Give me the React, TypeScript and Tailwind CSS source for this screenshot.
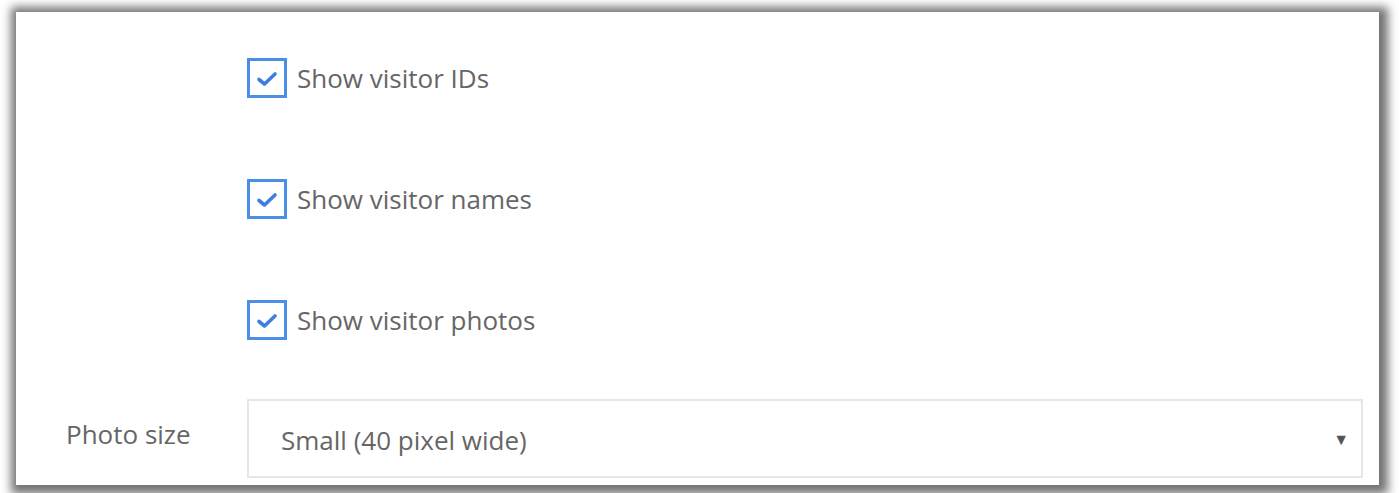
import React, { useState } from "react";

const font = { fontFamily: '"Open Sans", "Noto Sans", sans-serif' };

type RowProps = { label: string; checked: boolean; onToggle: () => void };

const CheckRow: React.FC<RowProps> = ({ label, checked, onToggle }) => (
  <label className="flex items-center gap-[10px] cursor-pointer select-none">
    <span
      onClick={onToggle}
      className="flex h-[40px] w-[40px] items-center justify-center border-[3px] border-[#4a8ee6] bg-white"
    >
      {checked && (
        <svg width="22" height="16" viewBox="0 0 22 16" fill="none" className="mt-[2px]">
          <path
            d="M3 8.5 L8.5 13 L19 3"
            stroke="#3d7fe0"
            strokeWidth="3.6"
            strokeLinecap="round"
            strokeLinejoin="round"
          />
        </svg>
      )}
    </span>
    <span className="text-[26px] text-[#666666] leading-none">{label}</span>
  </label>
);

const App: React.FC = () => {
  const [ids, setIds] = useState(true);
  const [names, setNames] = useState(true);
  const [photos, setPhotos] = useState(true);

  return (
    <div className="h-[493px] w-[1399px] bg-white pl-[16px] pt-[12px]" style={font}>
      <div className="flex h-[473px] w-[1363px] flex-col bg-white pt-[46px] shadow-[2px_2px_9px_7px_rgba(0,0,0,0.55)]">
        <div className="flex flex-col gap-[81px] pl-[231px]">
          <CheckRow label="Show visitor IDs" checked={ids} onToggle={() => setIds(!ids)} />
          <CheckRow label="Show visitor names" checked={names} onToggle={() => setNames(!names)} />
          <CheckRow label="Show visitor photos" checked={photos} onToggle={() => setPhotos(!photos)} />
        </div>

        <div className="mt-[59px] flex items-center">
          <div className="w-[231px] pl-[50px] pb-[8px] text-[26px] text-[#666666]">Photo size</div>
          <div className="flex h-[79px] flex-1 items-center justify-between border-2 border-[#e6e6e6] pl-[32px] pr-[12px] mr-[16px]">
            <span className="pt-[4px] text-[26px] text-[#666666]">Small (40 pixel wide)</span>
            <span className="text-[16px] text-[#555555]">▼</span>
          </div>
        </div>
      </div>
    </div>
  );
};

export default App;
